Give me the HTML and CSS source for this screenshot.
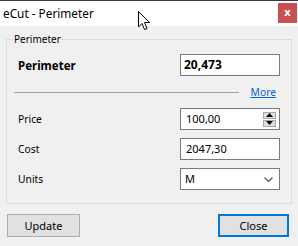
FILE: index.html
```html
<!DOCTYPE html>
<html lang="en">
<head>
  <meta charset="UTF-8" />
  <title>eCut - Perimeter</title>
  <link rel="stylesheet" href="styles.css">
</head>
<body>
  <div class="window">
    <div class="titlebar">
      <span class="title">eCut - Perimeter</span>
      <span class="close-x">x</span>
    </div>

    <fieldset class="group">
      <legend>Perimeter</legend>

      <div class="row">
        <span class="label bold">Perimeter</span>
        <div class="field total">20,473</div>
      </div>

      <div class="sep-row">
        <div class="sep"></div>
        <a class="more" href="#">More</a>
      </div>

      <div class="row">
        <span class="label">Price</span>
        <div class="field spin-field">
          <span>100,00</span>
          <div class="spinner">
            <div class="spin-btn">
              <svg width="7" height="4" viewBox="0 0 7 4"><polygon points="0,4 3.5,0 7,4" fill="#000"/></svg>
            </div>
            <div class="spin-btn">
              <svg width="7" height="4" viewBox="0 0 7 4"><polygon points="0,0 3.5,4 7,0" fill="#000"/></svg>
            </div>
          </div>
        </div>
      </div>

      <div class="row">
        <span class="label">Cost</span>
        <div class="field">2047,30</div>
      </div>

      <div class="row">
        <span class="label">Units</span>
        <div class="field select-field">
          <span>M</span>
          <svg width="9" height="5" viewBox="0 0 9 5"><polyline points="0.5,0.5 4.5,4.5 8.5,0.5" fill="none" stroke="#555" stroke-width="1.2"/></svg>
        </div>
      </div>
    </fieldset>

    <div class="buttons">
      <button class="btn btn-update">Update</button>
      <button class="btn btn-close">Close</button>
    </div>

    <svg class="cursor" width="13" height="20" viewBox="0 0 13 20">
      <polygon points="0.5,0.5 0.5,16 4,12.5 6.5,18.5 9,17.5 6.5,11.5 11.5,11.5" fill="#fff" stroke="#000" stroke-width="1"/>
    </svg>
  </div>
</body>
</html>
```

FILE: styles.css
```css
body {
  margin: 0;
  padding: 0;
  font-family: 'Noto Sans', 'Liberation Sans', sans-serif;
  font-size: 10.5px;
  color: #000;
}

.window {
  position: relative;
  width: 298px;
  height: 246px;
  background: #f0f0f0;
  overflow: hidden;
}

.titlebar {
  height: 25px;
  border-top: 1px solid #3a3a3a;
  background: #fff;
  display: flex;
  justify-content: space-between;
  align-items: flex-start;
}

.title {
  margin: 4px 0 0 3px;
  font-size: 11.8px;
  line-height: 16px;
}

.close-x {
  width: 19px;
  height: 20px;
  margin-top: 2px;
  margin-right: 1px;
  background: #c75050;
  color: #fff;
  font-weight: bold;
  font-size: 11px;
  line-height: 18px;
  text-align: center;
}

.group {
  margin: 6px 6px 0 6px;
  padding: 8px 11px 13px 11px;
  border: 1px solid #dcdcdc;
}

.group legend {
  margin-left: -4px;
  padding: 0;
  font-size: 10px;
  line-height: 14px;
}

.row {
  display: grid;
  grid-template-columns: 162px 100px;
  align-items: center;
  margin-bottom: 8px;
}

.row:last-child {
  margin-bottom: 0;
}

.label {
  font-size: 10.3px;
}

.bold {
  font-weight: bold;
  font-size: 11.5px;
}

.field {
  box-sizing: border-box;
  height: 22px;
  border: 1px solid #7a7a7a;
  background: #fff;
  padding: 0 5px;
  font-size: 11px;
  line-height: 20px;
}

.total {
  padding-left: 3px;
  font-weight: bold;
  font-size: 12px;
}

.spin-field,
.select-field {
  display: flex;
  justify-content: space-between;
  align-items: center;
  padding-right: 3px;
}

.select-field {
  padding-left: 4px;
  padding-right: 6px;
}

.spinner {
  display: flex;
  flex-direction: column;
  gap: 1px;
}

.spin-btn {
  width: 13px;
  height: 7px;
  box-sizing: border-box;
  border: 1px solid #a8a8a8;
  background: #dedede;
  display: flex;
  justify-content: center;
  align-items: center;
}

.sep-row {
  display: flex;
  align-items: center;
  height: 14px;
  margin: 9px 0 9px -4px;
}

.sep {
  flex: 1;
  height: 1px;
  background: #a0a0a0;
}

.more {
  margin: 0 4px 0 12px;
  font-size: 10.3px;
  color: #0066cc;
}

.buttons {
  display: flex;
  justify-content: space-between;
  margin: 10px 9px 0 7px;
}

.btn {
  height: 23px;
  font-family: inherit;
  font-size: 11px;
  background: #e1e1e1;
  border: 1px solid #adadad;
  padding: 0;
  color: #000;
}

.btn-update {
  width: 73px;
}

.btn-close {
  width: 71px;
  border: 2px solid #0078d7;
}

.cursor {
  position: absolute;
  left: 138px;
  top: 11px;
}
```
